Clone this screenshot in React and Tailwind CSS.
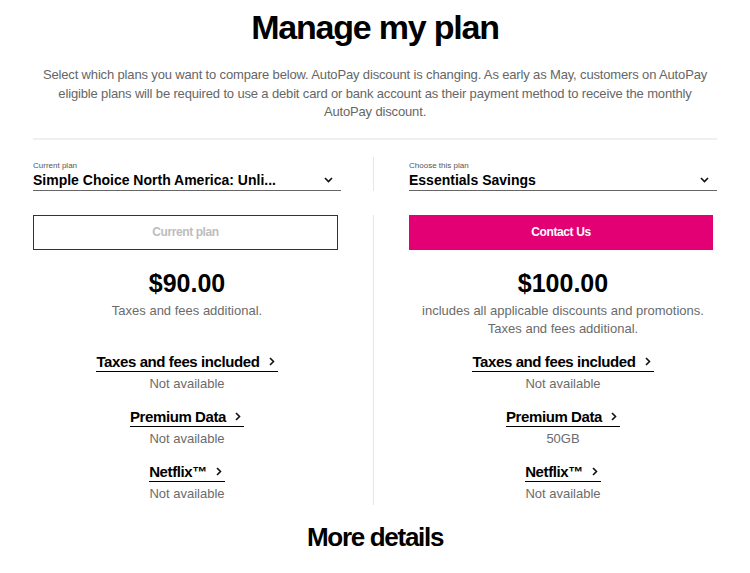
const LEFT = 'pr-[32px]';
const RIGHT = 'border-l border-[#e6e6e6] pl-[35px]';

function ChevronDown() {
  return (
    <svg width="9" height="6" viewBox="0 0 9 6" fill="none" className="mr-[8px] shrink-0">
      <path d="M1 1l3.5 3.5L8 1" stroke="#111" strokeWidth="1.6" />
    </svg>
  );
}

function ChevronRight() {
  return (
    <svg width="6" height="9" viewBox="0 0 6 9" fill="none" className="shrink-0">
      <path d="M1 1l3.5 3.5L1 8" stroke="#111" strokeWidth="1.6" />
    </svg>
  );
}

// Dropdown-looking plan picker: tiny caption over a bold value with an underline.
function PlanSelect({ label, value }) {
  return (
    <div className="pt-[4px]">
      <div className="text-[8px] leading-[10px] text-[#555]">{label}</div>
      <div className="flex h-[20px] items-center justify-between border-b-[1.5px] border-[#666]">
        <span className="text-[14px] leading-[18px] font-bold">{value}</span>
        <ChevronDown />
      </div>
    </div>
  );
}

function Price({ amount, lines }) {
  return (
    <div className="pt-[18px] text-center">
      <div className="text-[25px] leading-[30px] font-bold">{amount}</div>
      <div className="mt-[4px] text-[13px] leading-[18px] text-[#6b6b6b]">
        {lines.map((l) => (
          <div key={l}>{l}</div>
        ))}
      </div>
    </div>
  );
}

function Feature({ label, value, first, last }) {
  return (
    <div className={`flex flex-col items-center ${first ? 'pt-[14px]' : 'pt-[13.5px]'} ${last ? 'pb-[2px]' : ''}`}>
      <a className="inline-flex items-center gap-[9px] border-b-[1.5px] border-black pr-[3px] text-[15px] leading-[19px] font-bold tracking-[-0.4px] cursor-pointer">
        {label}
        <ChevronRight />
      </a>
      <div className="mt-[3.5px] text-[13px] leading-[18px] text-[#6b6b6b]">{value}</div>
    </div>
  );
}

const FEATURES = [
  { label: 'Taxes and fees included', current: 'Not available', chosen: 'Not available' },
  { label: 'Premium Data', current: 'Not available', chosen: '50GB' },
  { label: 'Netflix™', current: 'Not available', chosen: 'Not available' },
];

export default function App() {
  return (
    <div className="min-h-[573px] bg-white font-['Liberation_Sans',Arial,sans-serif] text-black">
      <div className="px-[33px] pt-[7px]">
        <h1 className="text-center text-[34px] leading-[40px] font-bold tracking-[-1.2px]">Manage my plan</h1>
        <p className="mx-auto mt-[19px] max-w-[690px] text-center text-[13px] leading-[18.5px] tracking-[-0.15px] text-[#666]">
          Select which plans you want to compare below. AutoPay discount is changing. As early as May, customers on
          AutoPay
          <br />
          eligible plans will be required to use a debit card or bank account as their payment method to receive the
          monthly
          <br />
          AutoPay discount.
        </p>
        <div className="mt-[16px] h-[2px] bg-[#f0f0f0]" />

        <div className="mt-[17px] grid grid-cols-[340px_1fr]">
          <div className={LEFT}>
            <PlanSelect label="Current plan" value="Simple Choice North America: Unli..." />
          </div>
          <div className={RIGHT}>
            <PlanSelect label="Choose this plan" value="Essentials Savings" />
          </div>
        </div>

        <div className="mt-[24px] grid grid-cols-[340px_1fr]">
          <div className={LEFT}>
            <button className="flex h-[35px] w-[calc(100%-3px)] items-center justify-center border border-[#333] bg-white text-[12px] font-bold tracking-[-0.4px] text-[#bdbdbd]">
              Current plan
            </button>
          </div>
          <div className={RIGHT}>
            <button className="flex h-[35px] w-[calc(100%-4px)] items-center justify-center bg-[#e20074] text-[12px] font-bold tracking-[-0.4px] text-white">
              Contact Us
            </button>
          </div>

          <div className={LEFT}>
            <Price amount="$90.00" lines={['Taxes and fees additional.']} />
          </div>
          <div className={RIGHT}>
            <Price
              amount="$100.00"
              lines={['includes all applicable discounts and promotions.', 'Taxes and fees additional.']}
            />
          </div>

          {FEATURES.map((f, i) => [
            <div key={f.label + 'l'} className={LEFT}>
              <Feature label={f.label} value={f.current} first={i === 0} last={i === FEATURES.length - 1} />
            </div>,
            <div key={f.label + 'r'} className={RIGHT}>
              <Feature label={f.label} value={f.chosen} first={i === 0} last={i === FEATURES.length - 1} />
            </div>,
          ])}
        </div>

        <h2 className="mt-[16px] text-center text-[26px] leading-[32px] font-bold tracking-[-1.3px]">More details</h2>
      </div>
    </div>
  );
}
